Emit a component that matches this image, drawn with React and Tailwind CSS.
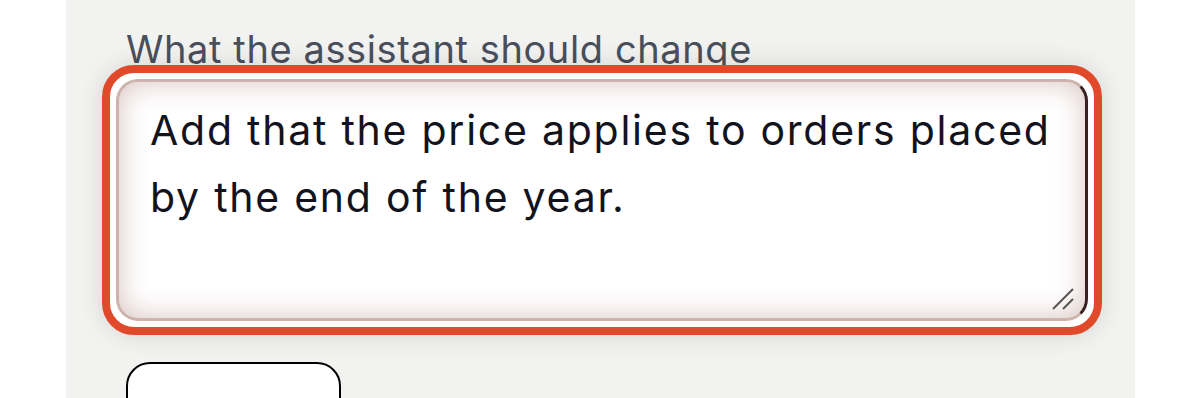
import React from "react";

export default function App() {
  return (
    <div className="w-[1200px] h-[398px] bg-white overflow-hidden flex" style={{ fontFamily: "Inter, 'Noto Sans', sans-serif" }}>
      <div className="ml-[66px] w-[1069px] h-full bg-[#f2f2f0] flex flex-col pl-[60px]">
        <div className="shrink-0 mt-[26px] text-[38px] leading-[46px] h-[40px] text-[#4a4f5c] tracking-[0.6px] whitespace-nowrap">What the assistant should change</div>
        <div className="shrink-0 relative z-10 -mt-[1px] -ml-[24px] w-[1000px] h-[270px] rounded-[32px] border-[8px] border-[#e04a2b] bg-white p-[6px] shadow-[0_0_24px_rgba(0,0,0,0.12)]">
          <div className="w-full h-full rounded-[22px] border-[3px] border-[#cdb2ad] border-r-[#3a2020] bg-white shadow-[inset_0_0_28px_rgba(140,80,70,0.35)] relative pl-[31px] pt-[15px]">
            <div className="text-[41px] leading-[67px] text-[#12131c] tracking-[1.75px] whitespace-nowrap">
              Add that the price applies to orders placed<br />by the end of the year.
            </div>
            <svg className="absolute right-[8px] bottom-[6px]" width="28" height="28" viewBox="0 0 28 28">
              <line x1="4" y1="25" x2="24" y2="5" stroke="#555" strokeWidth="2" />
              <line x1="14" y1="25" x2="24" y2="15" stroke="#555" strokeWidth="2" />
            </svg>
          </div>
        </div>
        <div className="shrink-0 mt-[27px] w-[215px] h-[60px] rounded-[24px] border-2 border-black bg-white" />
      </div>
    </div>
  );
}
